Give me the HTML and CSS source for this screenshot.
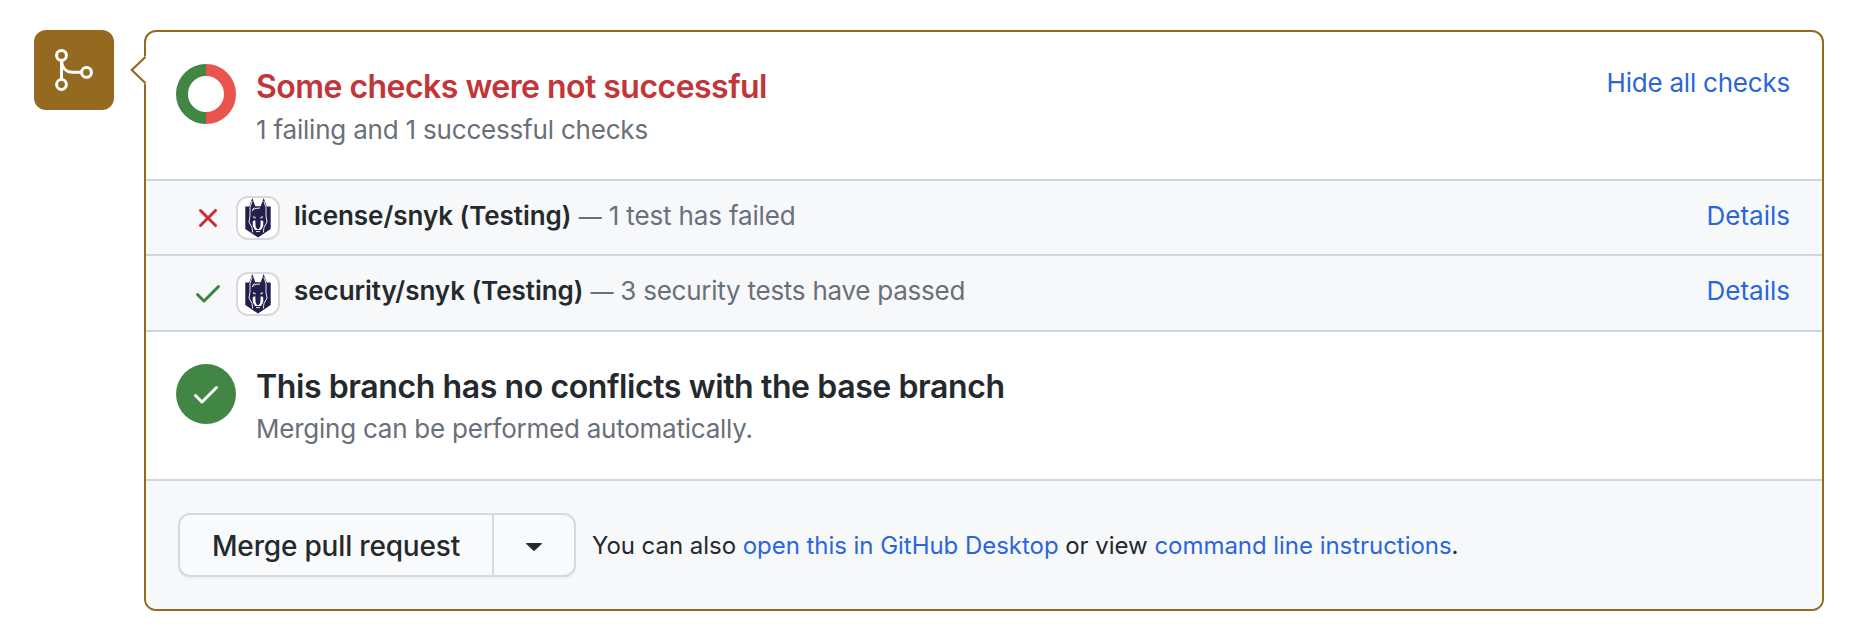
FILE: index.html
```
<!DOCTYPE html>
<html lang="en">
<head>
<meta charset="utf-8">
<title>Merge status</title>
<link rel="stylesheet" href="styles.css">
</head>
<body>
<svg class="defs" aria-hidden="true">
  <symbol id="check" viewBox="0 0 16 16"><path d="M13.78 4.22a.75.75 0 0 1 0 1.06l-7.25 7.25a.75.75 0 0 1-1.06 0L2.22 9.28a.75.75 0 0 1 1.06-1.06L6 10.94l6.72-6.72a.75.75 0 0 1 1.06 0z"/></symbol>
  <symbol id="cross" viewBox="0 0 16 16"><path d="M3.72 3.72a.75.75 0 0 1 1.06 0L8 6.94l3.22-3.22a.75.75 0 1 1 1.06 1.06L9.06 8l3.22 3.22a.75.75 0 1 1-1.06 1.06L8 9.06l-3.22 3.22a.75.75 0 0 1-1.06-1.06L6.94 8 3.72 4.78a.75.75 0 0 1 0-1.06z"/></symbol>
  <symbol id="dog" viewBox="0 0 44 44">
    <path fill="#211f4b" d="M9.300 10.500h4L16.300 2l3 8.300h5.400L27.700 2l3 8.500h4V33L22 41.500 9.300 33z"/>
    <path fill="none" stroke="#fff" stroke-width=".9" d="M16.200 5 14 11.500V20l-1 6 3 5.500.7 5M27.800 5 30 11.500V20l1 6-3 5.500-.7 5M16 15l3-2.500 5-.5M18.500 11.500l-2.200 2"/>
    <path fill="#b9b8c9" d="m16.800 20 3 1v1.500l-2.700-.5zM27.200 20l-3 1v1.500l2.700-.5z"/>
    <path fill="#fff" d="m16.800 25 2.500-.8.300 6.300L21 33h2l1.400-2.500.3-6.300 2.500.8v5l-2.200 4h-6l-2.200-4z"/>
    <path fill="none" stroke="#fff" stroke-width=".9" d="M20 35.600h4"/>
  </symbol>
</svg>
<main class="merge">
  <div class="badge">
    <svg class="badge-icon" viewBox="0 0 80 80"><g fill="none" stroke="#fff" stroke-width="3"><circle cx="27.500" cy="25.400" r="4.900"/><circle cx="27.500" cy="54.500" r="4.900"/><circle cx="52.500" cy="42.400" r="4.900"/><path d="M27.500 30v20M27.500 31c.5 6.500 4 11.300 11 11.300h9"/></g></svg>
  </div>
  <div class="box">
    <svg class="pointer" viewBox="0 0 17 28"><path fill="#fff" d="M17 0v28h-2L1.500 14 15 0z"/><path fill="none" stroke="#956a20" stroke-width="2.200" d="M15.600 .8 1.800 14 15.600 27.200"/></svg>
    <section class="summary">
      <svg class="round" viewBox="0 0 60 60"><g fill="none" stroke-width="12"><path stroke="#418645" d="M30 54a24 24 0 0 1 0-48"/><path stroke="#e9544f" d="M30 6a24 24 0 0 1 0 48"/></g></svg>
      <div class="copy">
        <h2 class="title failed">Some checks were not successful</h2>
        <p class="note">1 failing and 1 successful checks</p>
      </div>
      <a class="link toggle">Hide all checks</a>
    </section>
    <div class="row">
      <svg class="state bad"><use href="#cross"/></svg>
      <span class="avatar"><svg class="dog"><use href="#dog"/></svg></span>
      <p class="desc"><strong class="name">license/snyk (Testing)</strong> <span class="dash">—</span> 1 test has failed</p>
      <a class="link">Details</a>
    </div>
    <div class="row tall">
      <svg class="state good"><use href="#check"/></svg>
      <span class="avatar"><svg class="dog"><use href="#dog"/></svg></span>
      <p class="desc long"><strong class="name">security/snyk (Testing)</strong> <span class="dash">—</span> 3 security tests have passed</p>
      <a class="link">Details</a>
    </div>
    <section class="summary ruled">
      <span class="round ok"><svg class="tick"><use href="#check"/></svg></span>
      <div class="copy">
        <h2 class="title">This branch has no conflicts with the base branch</h2>
        <p class="note auto">Merging can be performed automatically.</p>
      </div>
    </section>
    <footer class="actions">
      <div class="buttons">
        <button class="btn" type="button">Merge pull request</button>
        <button class="btn more" type="button" aria-label="Select merge method"><svg class="caret" viewBox="0 0 16 8"><path d="M.8 0h14.400c.7 0 .9.700.5 1.100L8.500 7.800q-.5.400-1 0L.3 1.100C-.1.700.1 0 .8 0z"/></svg></button>
      </div>
      <p class="also">You can also <a class="link">open this in GitHub Desktop</a> or view <a class="link">command line instructions</a>.</p>
    </footer>
  </div>
</main>
</body>
</html>
```
FILE: styles.css
```
* { box-sizing: border-box; }
body { margin: 0; background: #fff; color: #24292e; font: 26px/38px Inter, "Liberation Sans", sans-serif; }
h2, p { margin: 0; }
svg { display: block; flex: none; }
.defs { position: absolute; width: 0; height: 0; }
.merge { display: flex; gap: 30px; padding: 30px 28px 0 34px; }
.badge { flex: none; width: 80px; height: 80px; border-radius: 12px; background: #956a20; }
.badge-icon { width: 80px; height: 80px; }
.box { position: relative; flex: 1; height: 581px; border: 2px solid #956a20; border-radius: 12px; }
.pointer { position: absolute; left: -16px; top: 24px; width: 17px; height: 28px; }
.summary { display: flex; height: 147px; padding: 32px 32px 0 30px; }
.round { flex: none; width: 60px; height: 60px; }
.ok { display: flex; align-items: center; justify-content: center; border-radius: 50%; background: #418645; }
.tick { width: 32px; height: 32px; fill: #fff; }
.copy { flex: 1; padding: 4px 0 0 20px; }
.title { font-size: 32px; font-weight: 600; line-height: 38px; letter-spacing: -.4px; }
.failed { color: #c23538; letter-spacing: -.53px; }
.note { margin-top: 5px; color: #697079; letter-spacing: -.2px; }
.auto { margin-top: 4px; letter-spacing: -.24px; }
.link { color: #2b66d9; }
.toggle { letter-spacing: -.22px; }
.row { display: flex; height: 75px; padding: 16px 32px 0 46px; border-top: 2px solid #d1d6dd; background: #f6f8fa; }
.tall { height: 76px; }
.state { width: 32px; height: 32px; margin-top: 5px; }
.avatar { flex: none; width: 44px; height: 44px; margin: -1px 0 0 12px; border-radius: 12px; background: #fff; box-shadow: inset 0 0 0 2px #d7d9dd; }
.tall .avatar { margin-top: 0; }
.bad { fill: #c9302f; }
.good { fill: #3a843e; }
.dog { width: 44px; height: 44px; }
.desc { flex: 1; padding-left: 14px; color: #697079; letter-spacing: -.15px; }
.long { letter-spacing: -.25px; }
.name { color: #24292e; font-weight: 600; letter-spacing: -.04px; }
.dash { font-size: 23px; }
.ruled { height: 149px; border-top: 2px solid #d1d6dd; }
.actions { display: flex; align-items: center; height: 130px; padding-left: 32px; border-top: 2px solid #d1d6dd; border-radius: 0 0 10px 10px; background: #f6f8fa; }
.buttons { display: flex; width: 398px; height: 64px; border: 2px solid #d7d9dc; border-radius: 12px; background: #f9fafc; box-shadow: 0 2px 0 rgba(27, 31, 35, .04); }
.btn { width: 312px; padding: 2px 0 0; border: 0; background: none; color: #24292e; font: 500 28px/38px Inter, sans-serif; letter-spacing: -.18px; }
.more { display: flex; align-items: center; justify-content: center; width: 82px; border-left: 2px solid #d7d9dc; }
.caret { width: 16px; height: 8px; margin-top: 2px; fill: #24292e; }
.also { padding: 2px 0 0 16px; font-size: 24px; letter-spacing: -.04px; }
```
